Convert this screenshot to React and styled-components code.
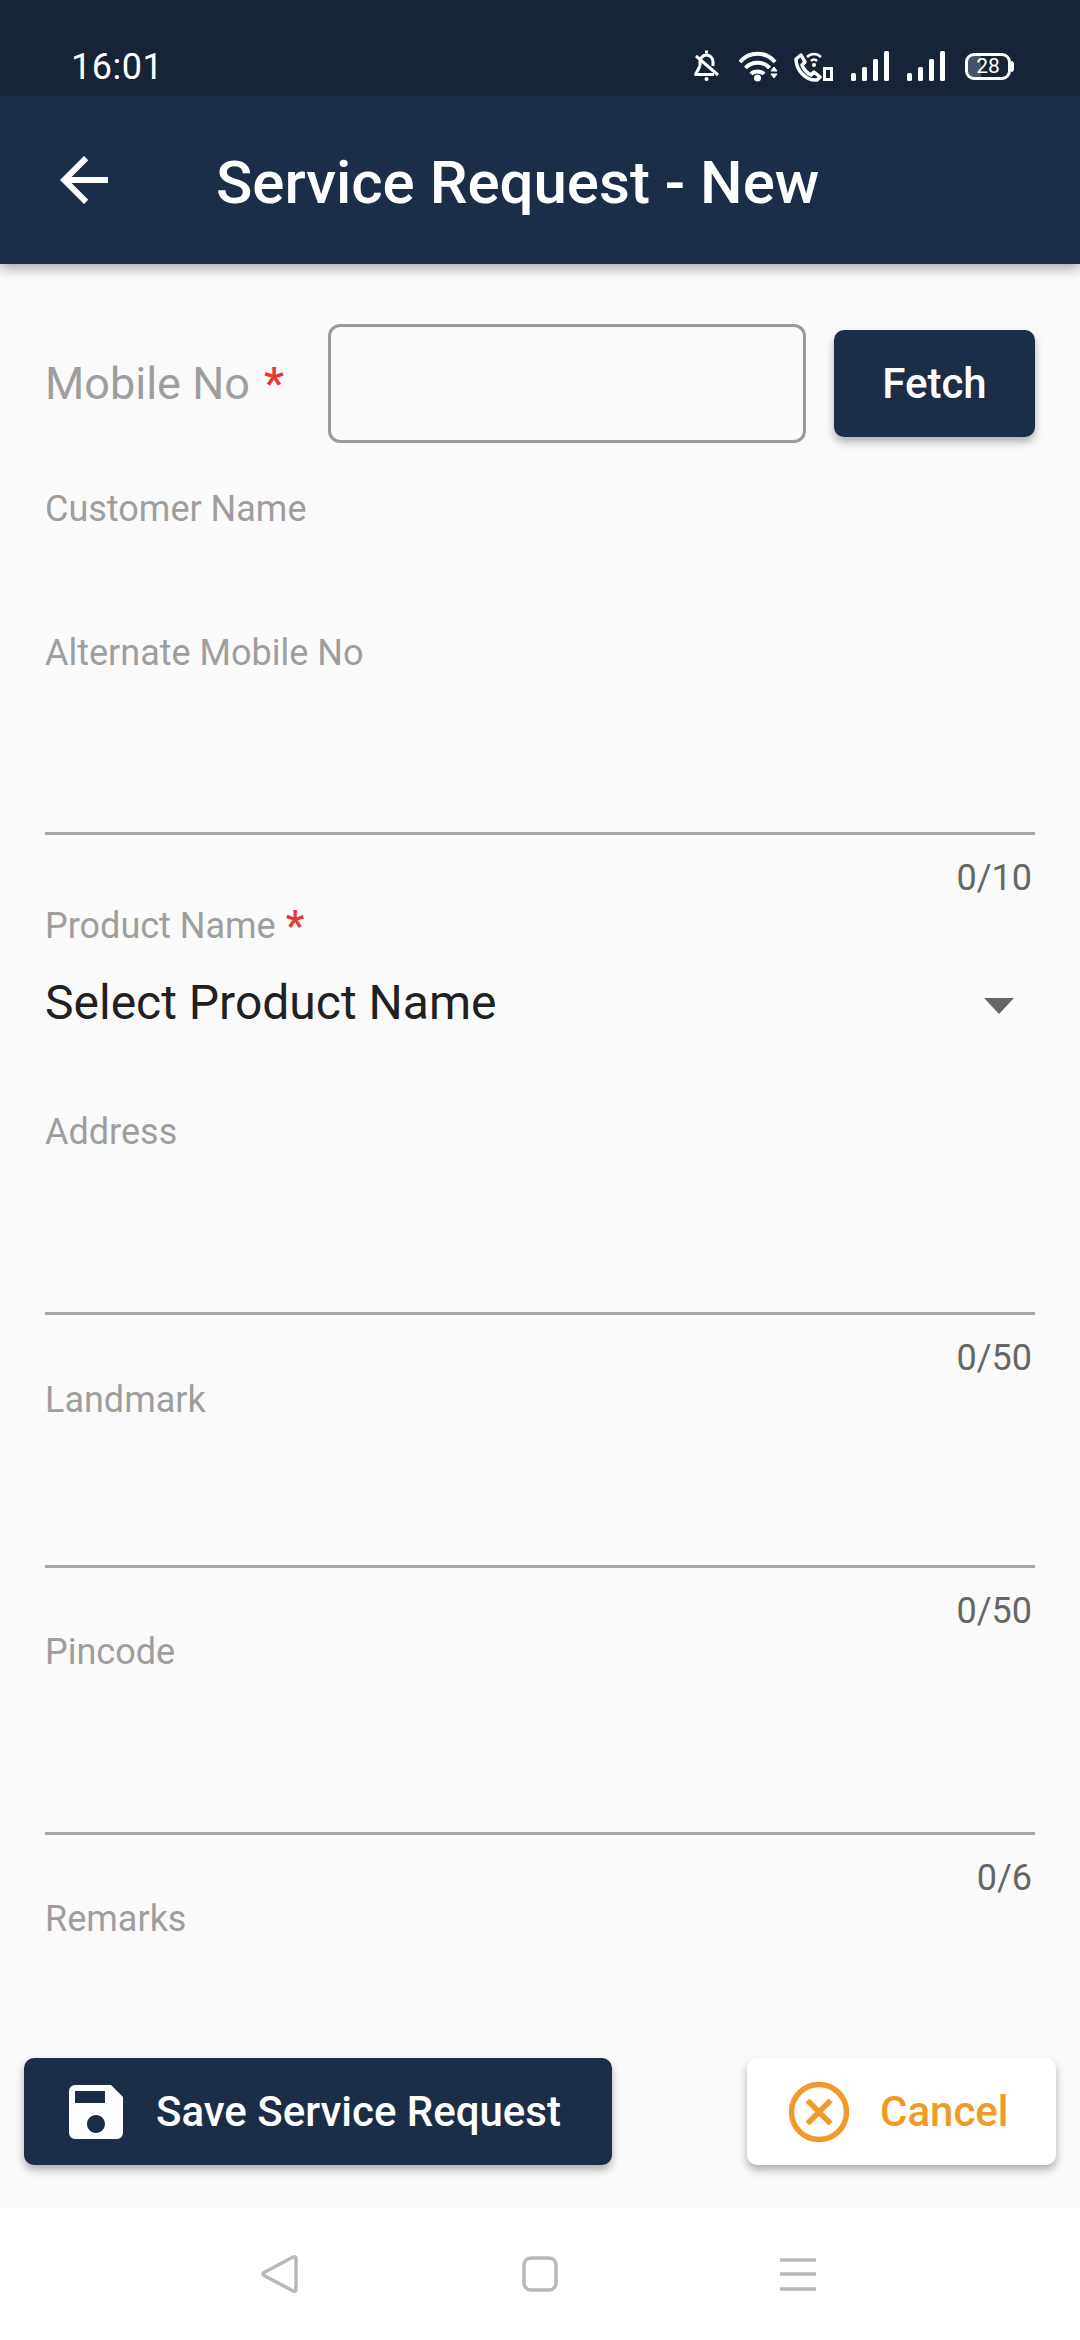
import React from 'react';
import styled, { createGlobalStyle } from 'styled-components';

const GlobalStyle = createGlobalStyle`
  html, body {
    margin: 0;
    padding: 0;
    background: #fafafa;
  }
  * {
    box-sizing: border-box;
  }
`;

const Screen = styled.div`
  width: 1080px;
  height: 2340px;
  display: flex;
  flex-direction: column;
  overflow: hidden;
  background: #fafafa;
  font-family: Roboto, "Liberation Sans", sans-serif;
`;

const StatusBar = styled.div`
  height: 96px;
  flex-shrink: 0;
  background: #172336;
  color: #fff;
  padding: 0 69px 0 71px;
  display: flex;
  align-items: center;
  justify-content: space-between;
  position: relative;
  z-index: 3;
`;

const Clock = styled.span`
  font-size: 36px;
  line-height: 40px;
  margin-top: 38px;
  letter-spacing: 0.5px;
`;

const StatusIcons = styled.div`
  display: flex;
  align-items: center;
  margin-top: 36px;
`;

const StatusIcon = styled.svg`
  display: block;
  width: ${(p) => p.$w}px;
  height: 32px;
  margin-right: ${(p) => p.$gap}px;
`;

const Battery = styled.div`
  width: 46px;
  height: 27px;
  border: 3px solid #fff;
  border-radius: 9px;
  background: linear-gradient(90deg, #46536a 0 32%, transparent 32%);
  color: #fff;
  font-size: 21px;
  line-height: 21px;
  text-align: center;
  position: relative;

  &::after {
    content: '';
    position: absolute;
    right: -6px;
    top: 5px;
    width: 3px;
    height: 11px;
    background: #fff;
    border-radius: 0 3px 3px 0;
  }
`;

const AppBar = styled.header`
  height: 168px;
  flex-shrink: 0;
  background: #1c2e47;
  color: #fff;
  display: flex;
  align-items: center;
  padding-left: 48px;
  box-shadow: 0 4px 12px rgba(0, 0, 0, 0.35);
  position: relative;
  z-index: 2;
`;

const BackButton = styled.svg`
  width: 72px;
  height: 72px;
  margin-right: 96px;
  fill: #fff;
  flex-shrink: 0;
`;

const Title = styled.h1`
  margin: 6px 0 0;
  font-size: 60px;
  line-height: 72px;
  font-weight: 500;
`;

const Form = styled.div`
  flex: 1;
  min-height: 0;
  overflow: hidden;
  padding: 60px 45px 0;
`;

const MobileRow = styled.div`
  display: flex;
  align-items: center;
  height: 119px;
`;

const MobileLabel = styled.label`
  width: 283px;
  flex-shrink: 0;
  font-size: 45px;
  line-height: 56px;
  color: #9e9e9e;
`;

const MobileInput = styled.input`
  width: 478px;
  height: 119px;
  background: transparent;
  border: 3px solid #9a9a9a;
  border-radius: 12px;
  outline: none;
  padding: 0 20px;
`;

const FetchButton = styled.button`
  width: 201px;
  height: 107px;
  margin-left: 28px;
  border: none;
  border-radius: 10px;
  background: #1c2e47;
  color: #fff;
  font-family: inherit;
  font-size: 42px;
  font-weight: 500;
  box-shadow: 0 5px 8px rgba(0, 0, 0, 0.3);
`;

const FieldLabel = styled.label`
  display: block;
  height: 36px;
  margin-top: ${(p) => p.$top}px;
  font-size: 36px;
  line-height: 36px;
  color: #9e9e9e;
`;

const Required = styled.span`
  color: #e53935;
  font-size: ${(p) => p.$size}px;
  line-height: 0;
  font-weight: 500;
  margin-left: ${(p) => p.$left}px;
  vertical-align: ${(p) => p.$drop}px;
`;

const LineInput = styled.input`
  display: block;
  width: 100%;
  height: ${(p) => p.$h}px;
  background: transparent;
  border: none;
  border-bottom: 3px solid #a6a6a6;
  outline: none;
  padding: 0;
`;

const Counter = styled.div`
  height: 36px;
  margin-top: 25px;
  padding-right: 3px;
  text-align: right;
  font-size: 36px;
  line-height: 36px;
  color: #666;
`;

const SelectRow = styled.div`
  height: 60px;
  margin-top: 29px;
  display: flex;
  align-items: center;
  justify-content: space-between;
  font-size: 48px;
  line-height: 60px;
  color: #212121;
`;

const Caret = styled.span`
  width: 0;
  height: 0;
  margin: 6px 21px 0 0;
  border-left: 15px solid transparent;
  border-right: 15px solid transparent;
  border-top: 16px solid #666;
`;

const Footer = styled.div`
  flex-shrink: 0;
  display: flex;
  justify-content: space-between;
  padding: 0 24px 43px;
  background: #fafafa;
`;

const ActionButton = styled.button`
  height: 107px;
  width: ${(p) => p.$w}px;
  display: flex;
  align-items: center;
  padding: 0 0 0 ${(p) => p.$pad}px;
  gap: ${(p) => p.$gap}px;
  border: none;
  border-radius: 10px;
  background: ${(p) => p.$bg};
  color: ${(p) => p.$fg};
  font-family: inherit;
  font-size: 42px;
  font-weight: 500;
  box-shadow: 0 5px 8px rgba(0, 0, 0, 0.3);
`;

const ButtonIcon = styled.svg`
  width: 72px;
  height: 72px;
  fill: currentColor;
  flex-shrink: 0;
`;

const NavBar = styled.nav`
  height: 132px;
  flex-shrink: 0;
  background: #fff;
  display: flex;
  align-items: center;
`;

const NavIcon = styled.svg`
  width: 48px;
  height: 48px;
  margin-left: ${(p) => p.$left}px;
  fill: none;
  stroke: #b9b9b9;
  stroke-width: 3.5;
  stroke-linejoin: round;
`;

const fields = [
  { label: 'Address', labelTop: 81, height: 165, count: '0/50' },
  { label: 'Landmark', labelTop: 6, height: 150, count: '0/50' },
  { label: 'Pincode', labelTop: 5, height: 165, count: '0/6' },
];

const SignalBars = () => (
  <>
    <rect x='0' y='23' width='5' height='8' rx='1.5' />
    <rect x='11' y='17' width='5' height='14' rx='1.5' />
    <rect x='22' y='9' width='5' height='22' rx='1.5' />
    <rect x='33' y='1' width='5' height='30' rx='1.5' />
  </>
);

const App = () => (
  <Screen>
    <GlobalStyle />
    <StatusBar>
      <Clock>16:01</Clock>
      <StatusIcons>
        <StatusIcon $w={27} $gap={19} viewBox='0 0 27 32' fill='none' stroke='#fff'>
          <path
            d='M7 16v-4c0-4 3-7 6.5-7S20 8 20 12v4M7 16l-4.5 8.5H21'
            strokeWidth='3'
            strokeLinejoin='round'
          />
          <path d='M3 6l22 19' strokeWidth='3' />
          <path d='M12 2h3' strokeWidth='3' />
          <circle cx='13.5' cy='29' r='2' fill='#fff' stroke='none' />
        </StatusIcon>
        <StatusIcon $w={40} $gap={14} viewBox='0 0 40 32' fill='none' stroke='#fff'>
          <path d='M1 12c9-11 26-11 35 0M6.500 18c6-7 18-7 24 0M12 24c3-3.500 10-3.500 13 0' strokeWidth='4' />
          <circle cx='18.5' cy='28' r='3.5' fill='#fff' stroke='none' />
          <path d='M32 21l3-4 3 4zM32 24l3 4 3-4z' fill='#fff' strokeWidth='1' />
        </StatusIcon>
        <StatusIcon $w={41} $gap={17} viewBox='0 0 41 32' fill='none' stroke='#fff'>
          <path
            d='M3 9l5-4 4 7-3 3c2 5 5 8 9 10l3-3 6 5-3 3C13 31 3 20 3 9z'
            strokeWidth='3.5'
            strokeLinejoin='round'
          />
          <path d='M14 7c4-4 10-4 14 0M18 11c2-2 4-2 6 0' strokeWidth='2.5' />
          <circle cx='21' cy='15' r='2' fill='#fff' stroke='none' />
          <rect x='31.500' y='18.500' width='7' height='11' strokeWidth='3' />
        </StatusIcon>
        <StatusIcon $w={38} $gap={18} viewBox='0 0 38 32' fill='#fff'>
          <SignalBars />
        </StatusIcon>
        <StatusIcon $w={38} $gap={20} viewBox='0 0 38 32' fill='#fff'>
          <SignalBars />
        </StatusIcon>
        <Battery>28</Battery>
      </StatusIcons>
    </StatusBar>

    <AppBar>
      <BackButton viewBox='0 0 24 24'>
        <path d='M20 11H7.83l5.59-5.59L12 4l-8 8 8 8 1.41-1.41L7.83 13H20v-2z' />
      </BackButton>
      <Title>Service Request - New</Title>
    </AppBar>

    <Form>
      <MobileRow>
        <MobileLabel>
          Mobile No <Required $size={45} $left={3} $drop={0}>*</Required>
        </MobileLabel>
        <MobileInput type='text' />
        <FetchButton type='button'>Fetch</FetchButton>
      </MobileRow>

      <FieldLabel $top={48}>Customer Name</FieldLabel>

      <FieldLabel $top={108}>Alternate Mobile No</FieldLabel>
      <LineInput type='text' $h={164} />
      <Counter>0/10</Counter>

      <FieldLabel $top={12}>
        Product Name<Required $size={42} $left={10} $drop={-2}>*</Required>
      </FieldLabel>
      <SelectRow>
        Select Product Name
        <Caret />
      </SelectRow>

      {fields.map((field) => (
        <React.Fragment key={field.label}>
          <FieldLabel $top={field.labelTop}>{field.label}</FieldLabel>
          <LineInput type='text' $h={field.height} />
          <Counter>{field.count}</Counter>
        </React.Fragment>
      ))}

      <FieldLabel $top={5}>Remarks</FieldLabel>
    </Form>

    <Footer>
      <ActionButton type='button' $w={588} $pad={36} $gap={24} $bg='#1c2e47' $fg='#fff'>
        <ButtonIcon viewBox='0 0 24 24'>
          <path d='M17 3H5a2 2 0 0 0-2 2v14a2 2 0 0 0 2 2h14a2 2 0 0 0 2-2V7l-4-4zm-5 16c-1.66 0-3-1.34-3-3s1.34-3 3-3 3 1.34 3 3-1.34 3-3 3zm3-10H5V5h10v4z' />
        </ButtonIcon>
        Save Service Request
      </ActionButton>
      <ActionButton type='button' $w={309} $pad={36} $gap={25} $bg='#fff' $fg='#f09a2a'>
        <ButtonIcon viewBox='0 0 72 72'>
          <circle cx='36' cy='36' r='27.5' fill='none' stroke='currentColor' strokeWidth='5.5' />
          <path d='M24.500 24.500l23 23M47.500 24.500l-23 23' fill='none' stroke='currentColor' strokeWidth='5.5' />
        </ButtonIcon>
        Cancel
      </ActionButton>
    </Footer>

    <NavBar>
      <NavIcon $left={256} viewBox='0 0 48 48'>
        <path d='M40 8.5c0-1.6-1.5-2.3-2.8-1.5L8 22.5c-1.2.8-1.2 2.2 0 3L37.2 41c1.3.8 2.8.1 2.8-1.5z' />
      </NavIcon>
      <NavIcon $left={212} viewBox='0 0 48 48'>
        <rect x='8' y='8' width='32' height='32' rx='7' />
      </NavIcon>
      <NavIcon $left={210} viewBox='0 0 48 48'>
        <path d='M6 10h36M6 24h36M6 39h36' />
      </NavIcon>
    </NavBar>
  </Screen>
);

export default App;
